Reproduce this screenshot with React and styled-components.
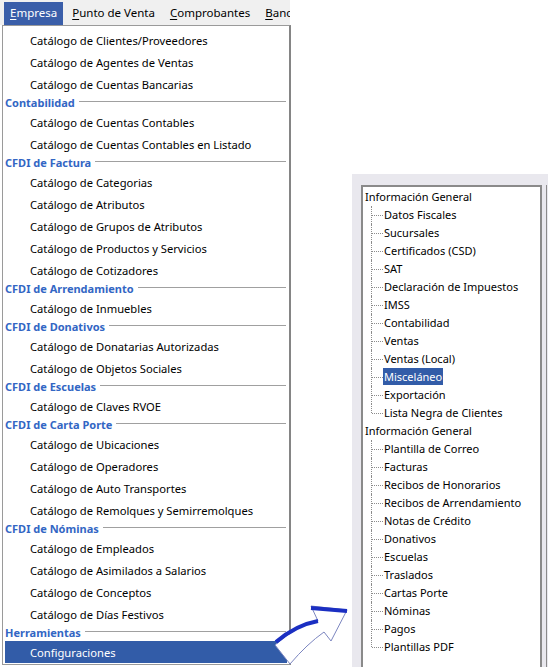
import React from "react";
import styled, { createGlobalStyle, css } from "styled-components";

const Global = createGlobalStyle`
  html, body { margin: 0; padding: 0; background: #ffffff; }
  body { font-family: "Noto Sans", "Open Sans", sans-serif; font-size: 11px; color: #000; }
  #root { width: 548px; height: 667px; }
`;

const Page = styled.div`
  position: relative;
  width: 548px;
  height: 667px;
  overflow: hidden;
  display: flex;
  align-items: flex-start;
`;

const LeftCol = styled.div`
  width: 291px;
  display: flex;
  flex-direction: column;
`;

const MenuBar = styled.div`
  width: 286px;
  height: 23px;
  padding: 2px 0 0 4px;
  background: #f0f0f0;
  display: flex;
  gap: 3px;
  overflow: hidden;
  white-space: nowrap;
`;

const MenuTop = styled.div`
  height: 23px;
  line-height: 22px;
  padding: 0 6px;
  font-size: 11.5px;
  flex-shrink: 0;
  color: ${(p) => (p.$active ? "#ffffff" : "#000000")};
  background: ${(p) => (p.$active ? "#3a5ea9" : "transparent")};
  u { text-decoration: underline; text-underline-offset: 2px; }
`;

const Dropdown = styled.div`
  margin-left: 2px;
  width: 282px;
  padding: 3px 2px 1px 2px;
  border: 1px solid #9a9a9a;
  border-right: 2px solid #858585;
  background: #ffffff;
  display: flex;
  flex-direction: column;
`;

const Item = styled.div`
  height: 22px;
  line-height: 23px;
  padding-left: 25px;
  font-size: 11.2px;
  white-space: nowrap;
  ${(p) =>
    p.$active &&
    css`
      background: #325ca8;
      color: #ffffff;
    `}
`;

const Header = styled.div`
  height: 16px;
  display: flex;
  align-items: center;
  gap: 4px;
`;

const HeaderLabel = styled.span`
  font-weight: 700;
  color: #3266c4;
  line-height: 16px;
  white-space: nowrap;
`;

const HeaderRule = styled.span`
  flex: 1;
  height: 0;
  margin-top: -3px;
  margin-right: 1px;
  border-top: 1px solid #a0a0a0;
  border-bottom: 1px solid #ffffff;
`;

const Panel = styled.div`
  margin-left: 61px;
  margin-top: 174px;
  width: 187px;
  height: 482px;
  padding: 11px 0 0 9px;
  background: #e9e8ee;
  display: flex;
  align-items: stretch;
`;

const TreeBox = styled.div`
  width: 176px;
  border: 2px solid #8a8a8a;
  border-bottom: none;
  background: #ffffff;
  padding: 1px 0 0 1px;
  overflow: hidden;
`;

const SideEdge = styled.div`
  margin-left: 4px;
  width: 0;
  border-left: 1px solid #8a8a8a;
`;

const TreeRow = styled.div`
  position: relative;
  height: 18px;
  line-height: 18px;
  white-space: nowrap;
  padding-left: ${(p) => (p.$child ? "19px" : "0")};
  ${(p) =>
    p.$child &&
    css`
      &::before {
        content: "";
        position: absolute;
        left: 7px;
        top: 0;
        height: ${p.$last ? "9px" : "18px"};
        border-left: 1px dotted #8c8c8c;
      }
      &::after {
        content: "";
        position: absolute;
        left: 8px;
        top: 9px;
        width: 11px;
        border-top: 1px dotted #8c8c8c;
      }
    `}
`;

const TreeLabel = styled.span`
  padding: 1px 1px;
  ${(p) =>
    p.$selected &&
    css`
      background: #325ca8;
      color: #ffffff;
    `}
`;

const ArrowSvg = styled.svg`
  position: absolute;
  left: 270px;
  top: 600px;
  width: 85px;
  height: 67px;
  overflow: visible;
`;

const sections = [
  {
    items: [
      "Catálogo de Clientes/Proveedores",
      "Catálogo de Agentes de Ventas",
      "Catálogo de Cuentas Bancarias",
    ],
  },
  {
    title: "Contabilidad",
    items: [
      "Catálogo de Cuentas Contables",
      "Catálogo de Cuentas Contables en Listado",
    ],
  },
  {
    title: "CFDI de Factura",
    items: [
      "Catálogo de Categorias",
      "Catálogo de Atributos",
      "Catálogo de Grupos de Atributos",
      "Catálogo de Productos y Servicios",
      "Catálogo de Cotizadores",
    ],
  },
  { title: "CFDI de Arrendamiento", items: ["Catálogo de Inmuebles"] },
  {
    title: "CFDI de Donativos",
    items: ["Catálogo de Donatarias Autorizadas", "Catálogo de Objetos Sociales"],
  },
  { title: "CFDI de Escuelas", items: ["Catálogo de Claves RVOE"] },
  {
    title: "CFDI de Carta Porte",
    items: [
      "Catálogo de Ubicaciones",
      "Catálogo de Operadores",
      "Catálogo de Auto Transportes",
      "Catálogo de Remolques y Semirremolques",
    ],
  },
  {
    title: "CFDI de Nóminas",
    items: [
      "Catálogo de Empleados",
      "Catálogo de Asimilados a Salarios",
      "Catálogo de Conceptos",
      "Catálogo de Días Festivos",
    ],
  },
  { title: "Herramientas", items: ["Configuraciones"], active: "Configuraciones" },
];

const tree = [
  {
    label: "Información General",
    children: [
      "Datos Fiscales",
      "Sucursales",
      "Certificados (CSD)",
      "SAT",
      "Declaración de Impuestos",
      "IMSS",
      "Contabilidad",
      "Ventas",
      "Ventas (Local)",
      "Misceláneo",
      "Exportación",
      "Lista Negra de Clientes",
    ],
  },
  {
    label: "Información General",
    children: [
      "Plantilla de Correo",
      "Facturas",
      "Recibos de Honorarios",
      "Recibos de Arrendamiento",
      "Notas de Crédito",
      "Donativos",
      "Escuelas",
      "Traslados",
      "Cartas Porte",
      "Nóminas",
      "Pagos",
      "Plantillas PDF",
    ],
  },
];

export default function App() {
  return (
    <>
      <Global />
      <Page>
        <LeftCol>
          <MenuBar>
            <MenuTop $active>
              <u>E</u>mpresa
            </MenuTop>
            <MenuTop>
              <u>P</u>unto de Venta
            </MenuTop>
            <MenuTop>
              <u>C</u>omprobantes
            </MenuTop>
            <MenuTop>
              <u>B</u>ancos
            </MenuTop>
          </MenuBar>
          <Dropdown>
            {sections.map((s, i) => (
              <React.Fragment key={i}>
                {s.title && (
                  <Header>
                    <HeaderLabel>{s.title}</HeaderLabel>
                    <HeaderRule />
                  </Header>
                )}
                {s.items.map((it) => (
                  <Item key={it} $active={s.active === it}>
                    {it}
                  </Item>
                ))}
              </React.Fragment>
            ))}
          </Dropdown>
        </LeftCol>
        <Panel>
          <TreeBox>
            {tree.map((g, gi) => (
              <React.Fragment key={gi}>
                <TreeRow>
                  <TreeLabel>{g.label}</TreeLabel>
                </TreeRow>
                {g.children.map((c, ci) => (
                  <TreeRow key={c} $child $last={ci === g.children.length - 1}>
                    <TreeLabel $selected={c === "Misceláneo"}>{c}</TreeLabel>
                  </TreeRow>
                ))}
              </React.Fragment>
            ))}
          </TreeBox>
          <SideEdge />
        </Panel>
        <ArrowSvg viewBox="0 0 85 67">
          <path
            d="M5,45 Q26,26 48,21 L41,6 L77,10 L61,41 L54,32 Q37,44 20,64 Z"
            fill="#ffffff"
            stroke="#7c86c0"
            strokeWidth="1"
            strokeLinejoin="round"
          />
          <path d="M6,42 Q26,25 48,21" fill="none" stroke="#1b2fc2" strokeWidth="4" />
          <path d="M41,8 L77,11" fill="none" stroke="#1b2fc2" strokeWidth="4" />
        </ArrowSvg>
      </Page>
    </>
  );
}
